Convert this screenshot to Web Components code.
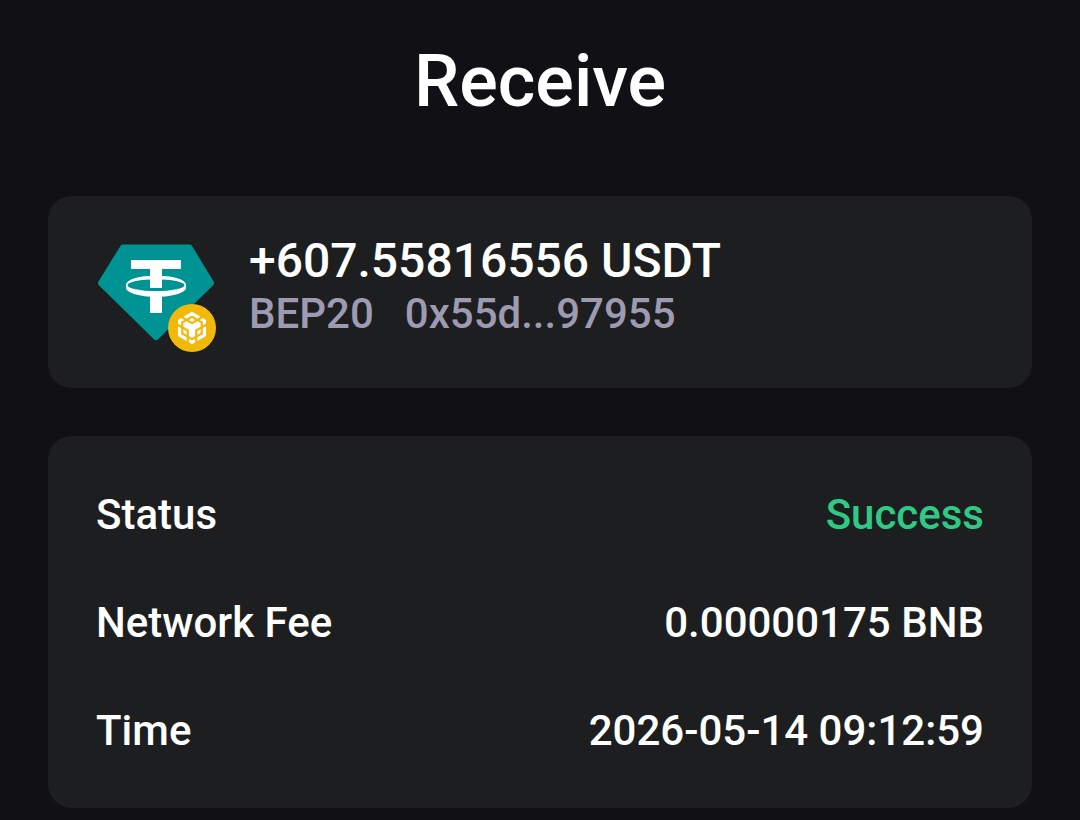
<!DOCTYPE html>
<html lang="en">
<head>
<meta charset="utf-8">
<title>Receive</title>
<style>
  html, body { margin: 0; height: 100%; background: #111115; overflow: hidden; }
</style>
</head>
<body>
<receive-page>
  <info-card>
    <token-summary amount="+607.55816556 USDT" network="BEP20" address="0x55d...97955"></token-summary>
  </info-card>
  <info-card>
    <detail-row label="Status" tone="success">Success</detail-row>
    <detail-row label="Network Fee">0.00000175 BNB</detail-row>
    <detail-row label="Time">2026-05-14 09:12:59</detail-row>
  </info-card>
</receive-page>
<script>
class Base extends HTMLElement {
  constructor() {
    super();
    this.attachShadow({ mode: 'open' });
  }
  connectedCallback() { this.shadowRoot.innerHTML = this.render(); }
}

customElements.define('receive-page', class extends Base {
  render() {
    return `<style>
      :host { display: flex; flex-direction: column; gap: 48px; box-sizing: border-box; min-height: 820px;
        padding: 0 48px 12px; color: #fff; font-family: Roboto, sans-serif; font-weight: 500; }
      h1 { margin: 0; height: 148px; box-sizing: border-box; padding-top: 40px; text-align: center;
        font-size: 72px; line-height: 84px; font-weight: 500; }
    </style><h1>Receive</h1><slot></slot>`;
  }
});

customElements.define('info-card', class extends Base {
  render() {
    return `<style>
      :host { display: block; box-sizing: border-box; background: #1d1e20; border-radius: 24px; padding: 24px 48px; }
    </style><slot></slot>`;
  }
});

customElements.define('detail-row', class extends Base {
  render() {
    return `<style>
      :host { display: flex; justify-content: space-between; align-items: center; height: 108px;
        box-sizing: border-box; padding-top: 2px;
        font-size: 42px; line-height: 50px; white-space: nowrap; }
      :host([tone="success"]) .value { color: #2fc985; }
    </style><span>${this.getAttribute('label')}</span><span class="value"><slot></slot></span>`;
  }
});

customElements.define('token-icon', class extends Base {
  render() {
    return `<style>
      :host { display: block; position: relative; width: 120px; height: 120px; }
      svg { display: block; }
      .chain { position: absolute; right: 0; bottom: 0; }
    </style>
    <svg width="120" height="120" viewBox="96 232 120 120">
      <path d="M123 247.500H189.500L211 283L156 337L101 283Z" fill="#009393" stroke="#009393" stroke-width="6" stroke-linejoin="round"/>
      <path d="M131 260H181V269H162V288H150V269H131Z" fill="#fff"/>
      <path d="M150 295H162V313H150Z" fill="#fff"/>
      <path fill="#fff" fill-rule="evenodd" d="M126 284.500a30 8.800 0 0 1 60 0v3.500a30 8.800 0 0 1-60 0ZM127.500 285.200a28.500 5.900 0 1 0 57 0a28.500 5.900 0 1 0-57 0Z"/>
    </svg>
    <svg class="chain" width="48" height="48" viewBox="0 0 48 48">
      <circle cx="24" cy="24" r="24" fill="#f0b90b"/>
      <path transform="translate(7.800 7.800) scale(1.350)" fill="#fff" d="M5.631 3.676 12.001 0l6.367 3.676-2.340 1.358L12 2.716 7.972 5.034l-2.340-1.358Zm12.737 4.636-2.340-1.358L12 9.272 7.972 6.954l-2.340 1.358v2.716l4.026 2.318v4.636L12 19.341l2.341-1.359v-4.636l4.027-2.318V8.312Zm0 7.352v-2.716l-2.340 1.358v2.716l2.340-1.358Zm1.663.960-4.027 2.318v2.717l6.368-3.677V10.630l-2.340 1.358v4.636Zm-2.340-10.630 2.340 1.358v2.716l2.341-1.358V5.994l-2.340-1.358-2.342 1.358Zm-8.033 13.690v2.717L12 24l2.341-1.358v-2.717l-2.340 1.358-2.342-1.358Zm-4.026-4.020 2.340 1.358v-2.716l-2.340-1.358v2.716Zm4.026-9.670L12 7.352l2.341-1.358-2.340-1.358-2.342 1.358Zm-5.689 1.358 2.340-1.358-2.340-1.358L1.628 5.994V8.710l2.341 1.358V7.352Zm0 4.636L1.628 10.630v7.353l6.367 3.676v-2.717L3.970 16.624v-4.636Z"/>
    </svg>`;
  }
});

customElements.define('token-summary', class extends Base {
  render() {
    return `<style>
      :host { display: flex; gap: 33px; height: 144px; white-space: nowrap; }
      token-icon { margin-top: 12px; }
      .text { padding-top: 13px; }
      .amount { font-size: 48px; line-height: 56px; }
      .sub { display: flex; gap: 31px; font-size: 42px; line-height: 50px; color: #9d9ab1; }
    </style>
    <token-icon></token-icon>
    <div class="text">
      <div class="amount">${this.getAttribute('amount')}</div>
      <div class="sub"><span>${this.getAttribute('network')}</span><span>${this.getAttribute('address')}</span></div>
    </div>`;
  }
});
</script>
</body>
</html>
